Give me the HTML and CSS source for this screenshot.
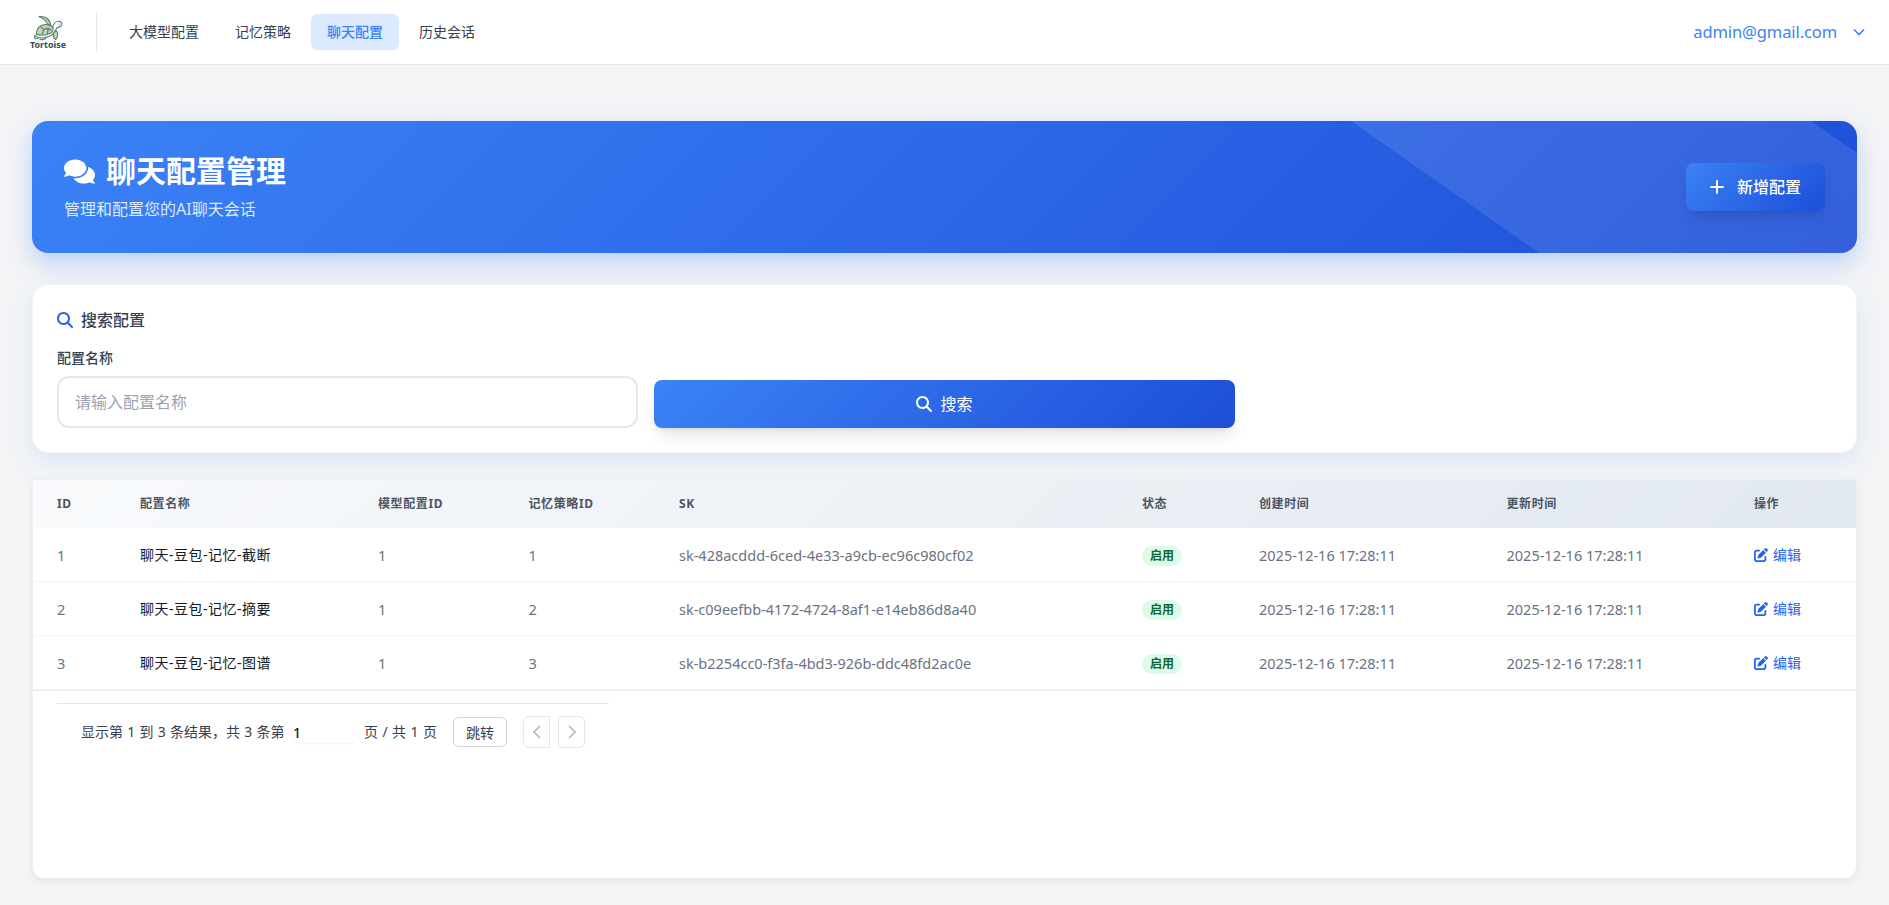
FILE: index.html
```html
<!DOCTYPE html>
<html lang="zh-CN">

<head>
  <meta charset="UTF-8">
  <meta name="viewport" content="width=device-width, initial-scale=1.0">
  <title>聊天配置管理</title>
  <link rel="stylesheet" href="styles.css">
</head>

<body>
  <!-- 公共图标 -->
  <svg class="sprite" aria-hidden="true">
    <symbol id="icon-search" viewBox="0 0 512 512">
      <path d="M416 208c0 45.900-14.900 88.300-40 122.700L502.600 457.400c12.500 12.500 12.500 32.800 0 45.300s-32.800 12.500-45.300 0L330.700 376c-34.400 25.200-76.800 40-122.700 40C93.100 416 0 322.900 0 208S93.100 0 208 0S416 93.100 416 208zM208 352a144 144 0 1 0 0-288 144 144 0 1 0 0 288z" />
    </symbol>
    <symbol id="icon-edit" viewBox="0 0 512 512">
      <path d="M471.600 21.700c-21.900-21.900-57.300-21.900-79.200 0L362.300 51.700l97.900 97.900 30.100-30.100c21.900-21.900 21.900-57.300 0-79.200L471.600 21.700zm-299.200 220c-6.100 6.100-10.800 13.600-13.500 21.900l-29.600 88.800c-2.900 8.600-.6 18.100 5.800 24.600s15.900 8.700 24.600 5.800l88.800-29.600c8.200-2.700 15.700-7.400 21.900-13.500L437.700 172.300 339.700 74.300 172.400 241.700zM96 64C43 64 0 107 0 160V416c0 53 43 96 96 96H352c53 0 96-43 96-96V320c0-17.700-14.300-32-32-32s-32 14.300-32 32v96c0 17.700-14.300 32-32 32H96c-17.700 0-32-14.300-32-32V160c0-17.700 14.300-32 32-32h96c17.700 0 32-14.300 32-32s-14.300-32-32-32H96z" />
    </symbol>
  </svg>

  <header class="header">
    <svg class="logo" viewBox="24 27 120 120">
      <g fill="none" stroke="#5a7f74" stroke-width="3.500" stroke-linecap="round" stroke-linejoin="round">
        <path fill="#c3d3ae" d="M57 35c17-3 32 6 35 25l-10-3c-2-10-9-15-25-22z" />
        <path fill="#c3d3ae" d="M49 88c0-20 15-32 33-29 13 2 20 9 17 17-4 11-27 18-50 12z" />
        <path d="M62 65l9 8-4 13M71 73l14-3 8 6M85 70l-3 15" />
        <path d="M98 67c3-12 11-20 20-18 8 2 10 9 5 14-6 5-11 2-14 8-5 14-17 25-34 26M117 57h1M44 91c8 7 22 9 32 7" />
        <path fill="#c3d3ae" d="M108 76c6 5 8 18-1 28-6-5-8-12-7-19z" />
        <path d="M45 93c-4 7 1 10 10 6M60 103c6 2 16 1 18-5" />
      </g>
      <text x="30" y="130" textLength="108" lengthAdjust="spacingAndGlyphs">Tortoise</text>
    </svg>
    <nav class="nav">
      <a class="nav-item">大模型配置</a>
      <a class="nav-item">记忆策略</a>
      <a class="nav-item active">聊天配置</a>
      <a class="nav-item">历史会话</a>
    </nav>
    <div class="user">
      <span>admin@gmail.com</span>
      <svg width="12" height="8" viewBox="0 0 12 8" fill="none" stroke="currentColor" stroke-width="1.7"><path d="M1 1.500l5 5 5-5" /></svg>
    </div>
  </header>

  <main class="main">
    <section class="banner">
      <div class="banner-text">
        <h1>
          <svg width="31" height="25" viewBox="0 32 576 448" fill="currentColor"><path d="M416 192c0-88.400-93.100-160-208-160S0 103.600 0 192c0 34.300 14.100 65.900 38 92-13.400 30.200-35.500 54.200-35.800 54.500-2.200 2.300-2.800 5.700-1.500 8.700S4.800 352 8 352c36.600 0 66.900-12.300 88.700-25 32.200 15.700 70.300 25 111.300 25 114.900 0 208-71.600 208-160zm122 220c23.900-26 38-57.700 38-92 0-66.900-53.500-124.200-129.300-148.100.9 6.600 1.300 13.300 1.300 20.100 0 105.900-107.700 192-240 192-10.800 0-21.300-.8-31.700-1.900C207.800 439.600 281.800 480 368 480c41 0 79.100-9.200 111.300-25 21.800 12.700 52.100 25 88.700 25 3.200 0 6.100-1.900 7.300-4.800 1.300-2.900.7-6.300-1.500-8.700-.3-.3-22.400-24.200-35.800-54.500z" /></svg>
          聊天配置管理
        </h1>
        <p>管理和配置您的AI聊天会话</p>
      </div>
      <button class="btn btn-add">
        <svg width="14" height="14" viewBox="0 0 14 14" fill="none" stroke="currentColor" stroke-width="1.900" stroke-linecap="round"><path d="M7 1v12M1 7h12" /></svg>
        新增配置
      </button>
    </section>

    <section class="search-card">
      <h2><svg class="icon" width="16" height="16"><use href="#icon-search" /></svg>搜索配置</h2>
      <div class="search-grid">
        <div class="field">
          <label for="configName">配置名称</label>
          <input type="text" id="configName" placeholder="请输入配置名称">
        </div>
        <button class="btn btn-search">
          <svg class="icon" width="16" height="16"><use href="#icon-search" /></svg>搜索
        </button>
      </div>
    </section>

    <section class="table-card">
      <table>
        <colgroup>
          <col class="col-id">
          <col class="col-name">
          <col class="col-model">
          <col class="col-memory">
          <col class="col-sk">
          <col class="col-status">
          <col class="col-time">
          <col class="col-time">
          <col>
        </colgroup>
        <thead>
          <tr>
            <th>ID</th>
            <th>配置名称</th>
            <th>模型配置ID</th>
            <th>记忆策略ID</th>
            <th>SK</th>
            <th>状态</th>
            <th>创建时间</th>
            <th>更新时间</th>
            <th>操作</th>
          </tr>
        </thead>
        <tbody>
          <tr>
            <td>1</td>
            <td class="name">聊天-豆包-记忆-截断</td>
            <td>1</td>
            <td>1</td>
            <td>sk-428acddd-6ced-4e33-a9cb-ec96c980cf02</td>
            <td><span class="badge">启用</span></td>
            <td>2025-12-16 17:28:11</td>
            <td>2025-12-16 17:28:11</td>
            <td><a class="edit"><svg width="14" height="14"><use href="#icon-edit" /></svg>编辑</a></td>
          </tr>
          <tr>
            <td>2</td>
            <td class="name">聊天-豆包-记忆-摘要</td>
            <td>1</td>
            <td>2</td>
            <td>sk-c09eefbb-4172-4724-8af1-e14eb86d8a40</td>
            <td><span class="badge">启用</span></td>
            <td>2025-12-16 17:28:11</td>
            <td>2025-12-16 17:28:11</td>
            <td><a class="edit"><svg width="14" height="14"><use href="#icon-edit" /></svg>编辑</a></td>
          </tr>
          <tr>
            <td>3</td>
            <td class="name">聊天-豆包-记忆-图谱</td>
            <td>1</td>
            <td>3</td>
            <td>sk-b2254cc0-f3fa-4bd3-926b-ddc48fd2ac0e</td>
            <td><span class="badge">启用</span></td>
            <td>2025-12-16 17:28:11</td>
            <td>2025-12-16 17:28:11</td>
            <td><a class="edit"><svg width="14" height="14"><use href="#icon-edit" /></svg>编辑</a></td>
          </tr>
        </tbody>
      </table>

      <!-- 分页 -->
      <div class="pagination-wrap">
        <div class="pagination">
          <span class="summary">显示第 1 到 3 条结果，共 3 条第</span>
          <input class="page-input" type="text" value="1">
          <span class="total">页 / 共 1 页</span>
          <button class="jump">跳转</button>
          <button class="page-btn prev"><svg width="8" height="14" viewBox="0 0 8 14"><path d="M7 1L1 7l6 6" /></svg></button>
          <button class="page-btn next"><svg width="8" height="14" viewBox="0 0 8 14"><path d="M1 1l6 6-6 6" /></svg></button>
        </div>
      </div>
    </section>
  </main>
</body>

</html>
```
FILE: styles.css
```css
* {
  box-sizing: border-box;
}

body {
  margin: 0;
  height: 100vh;
  overflow: hidden;
  background-color: #f3f4f6;
  color: #374151;
  font-family: "Noto Sans", "Noto Sans CJK SC", sans-serif;
  font-size: 14px;
  line-height: 20px;
}

h1,
h2,
p {
  margin: 0;
}

button,
input {
  font-family: inherit;
}

svg {
  flex-shrink: 0;
}

.sprite {
  display: none;
}

/* 顶部导航 */
.header {
  display: flex;
  align-items: center;
  height: 65px;
  padding: 0 24px 0 28px;
  background-color: #fff;
  border-bottom: 1px solid #e5e7eb;
}

.logo {
  width: 40px;
  height: 40px;
  margin-top: 4px;
}

.logo text {
  fill: #334b4b;
  font-size: 25px;
  font-weight: 700;
}

.nav {
  display: flex;
  align-items: center;
  gap: 4px;
  height: 40px;
  margin-left: 28px;
  padding-left: 16px;
  border-left: 1px solid #e5e7eb;
}

.nav-item {
  padding: 8px 16px;
  border-radius: 6px;
}

.nav-item.active {
  background-color: #dbeafe;
  color: #3b82f6;
  font-weight: 500;
}

.user {
  display: flex;
  align-items: center;
  gap: 16px;
  margin-left: auto;
  color: #3b82f6;
  font-size: 16.5px;
}

.user span {
  letter-spacing: -0.1px;
}

.main {
  padding: 56px 32px 0;
}

/* 标题横幅 */
.banner {
  position: relative;
  display: flex;
  justify-content: space-between;
  align-items: center;
  height: 132px;
  padding: 32px;
  border-radius: 16px;
  background: linear-gradient(135deg, #3b82f6 0%, #1d4ed8 100%);
  box-shadow: 0 10px 25px rgba(59, 130, 246, 0.3);
  color: #fff;
}

/* 斜向高光 */
.banner::before {
  content: "";
  position: absolute;
  inset: 0;
  border-radius: 16px;
  background-color: rgba(255, 255, 255, 0.1);
  clip-path: polygon(1319px 0, 1779px 0, 1825px 32px, 1825px 132px, 1507px 132px);
}

.banner h1 {
  display: flex;
  align-items: center;
  gap: 11px;
  font-size: 30px;
  font-weight: 700;
  line-height: 36px;
}

.banner p {
  margin-top: 8px;
  color: #dbeafe;
  font-size: 16px;
  line-height: 24px;
}

.btn {
  position: relative;
  display: flex;
  align-items: center;
  justify-content: center;
  height: 48px;
  padding: 0 24px;
  border: none;
  border-radius: 8px;
  background: linear-gradient(135deg, #3b82f6, #1d4ed8);
  box-shadow: 0 10px 15px -3px rgba(0, 0, 0, 0.1), 0 4px 6px -4px rgba(0, 0, 0, 0.1);
  color: #fff;
  font-size: 16px;
  line-height: 24px;
}

.btn-add {
  gap: 13px;
  font-weight: 500;
}

.btn-search {
  gap: 8px;
}

.icon {
  fill: currentColor;
}

/* 搜索 */
.search-card {
  margin-top: 31px;
  padding: 23px 24px 24px;
  height: 169px;
  border: 1px solid #f3f4f6;
  border-radius: 16px;
  background-color: #fff;
  box-shadow: 0 8px 25px rgba(59, 130, 246, 0.12);
}

.search-card h2 {
  display: flex;
  align-items: center;
  gap: 8px;
  margin-bottom: 16px;
  color: #374151;
  font-size: 16px;
  font-weight: 500;
  line-height: 24px;
}

.search-card h2 .icon {
  color: #2563eb;
}

.search-grid {
  display: grid;
  grid-template-columns: repeat(3, 1fr);
  gap: 16px;
  align-items: end;
}

.field {
  display: flex;
  flex-direction: column;
  gap: 8px;
}

.field label {
  font-weight: 500;
}

.field input {
  height: 52px;
  padding: 0 16px;
  border: 2px solid #e2e8f0;
  border-radius: 12px;
  font-size: 16px;
}

.field input::placeholder {
  color: #9ca3af;
}

/* 表格 */
.table-card {
  height: 400px;
  margin-top: 26px;
  border: 1px solid #eef0f3;
  border-radius: 0 0 12px 12px;
  background-color: #fff;
  box-shadow: 0 2px 6px rgba(0, 0, 0, 0.07);
}

table {
  width: 100%;
  table-layout: fixed;
  border-collapse: separate;
  border-spacing: 0;
  border-bottom: 1px solid #e5e7eb;
}

.col-id {
  width: 83px;
}

.col-name {
  width: 238px;
}

.col-model,
.col-memory {
  width: 150.5px;
}

.col-sk {
  width: 463px;
}

.col-status {
  width: 117px;
}

.col-time {
  width: 247.5px;
}

thead {
  background: linear-gradient(135deg, #f8fafc 0%, #e2e8f0 100%);
}

th,
td {
  padding: 0 24px;
  text-align: left;
  white-space: nowrap;
}

th {
  height: 48px;
  color: #4b5563;
  font-size: 12px;
  font-weight: 700;
  letter-spacing: 0.6px;
}

td {
  height: 54px;
  border-bottom: 1px solid #f3f4f6;
  color: #6b7280;
  font-size: 14.5px;
}

td.name {
  color: #111827;
  font-size: 14px;
  letter-spacing: 0.5px;
}

.badge {
  display: inline-block;
  padding: 2px 8px;
  border-radius: 10px;
  background-color: #dcfce7;
  color: #166534;
  font-size: 12px;
  font-weight: 700;
  line-height: 16px;
  vertical-align: middle;
}

.edit {
  display: flex;
  align-items: center;
  gap: 5px;
  color: #2563eb;
  font-size: 14px;
}

.edit svg {
  fill: currentColor;
}

/* 分页 */
.pagination-wrap {
  padding: 12px 24px 0;
}

.pagination {
  display: flex;
  align-items: center;
  width: 552px;
  height: 57px;
  padding: 0 24px;
  border-top: 1px solid #e5e7eb;
}

.summary {
  width: 212px;
  white-space: nowrap;
  word-spacing: 0.6px;
}

.page-input {
  width: 64px;
  height: 21px;
  padding: 0;
  border: none;
  border-radius: 6px;
  box-shadow: 0 1px 2px rgba(0, 0, 0, 0.05);
  color: #111827;
  font-size: 14px;
  font-weight: 500;
}

.total {
  width: 96px;
  padding-left: 7px;
  white-space: nowrap;
  word-spacing: 0.8px;
}

.jump {
  width: 54px;
  height: 30px;
  padding: 0;
  border: 1px solid #d1d5db;
  border-radius: 6px;
  background-color: #fff;
  color: #374151;
  font-size: 14px;
}

.page-btn {
  display: flex;
  align-items: center;
  justify-content: center;
  width: 27px;
  height: 32px;
  padding: 0;
  border: 1px solid #e5e7eb;
  background-color: #fff;
}

.page-btn path {
  fill: none;
  stroke: #b4b9c1;
  stroke-width: 1.6;
}

.prev {
  margin-left: 16px;
  border-radius: 6px 0 0 6px;
}

.next {
  margin-left: 8px;
  border-radius: 0 6px 6px 0;
}
```
